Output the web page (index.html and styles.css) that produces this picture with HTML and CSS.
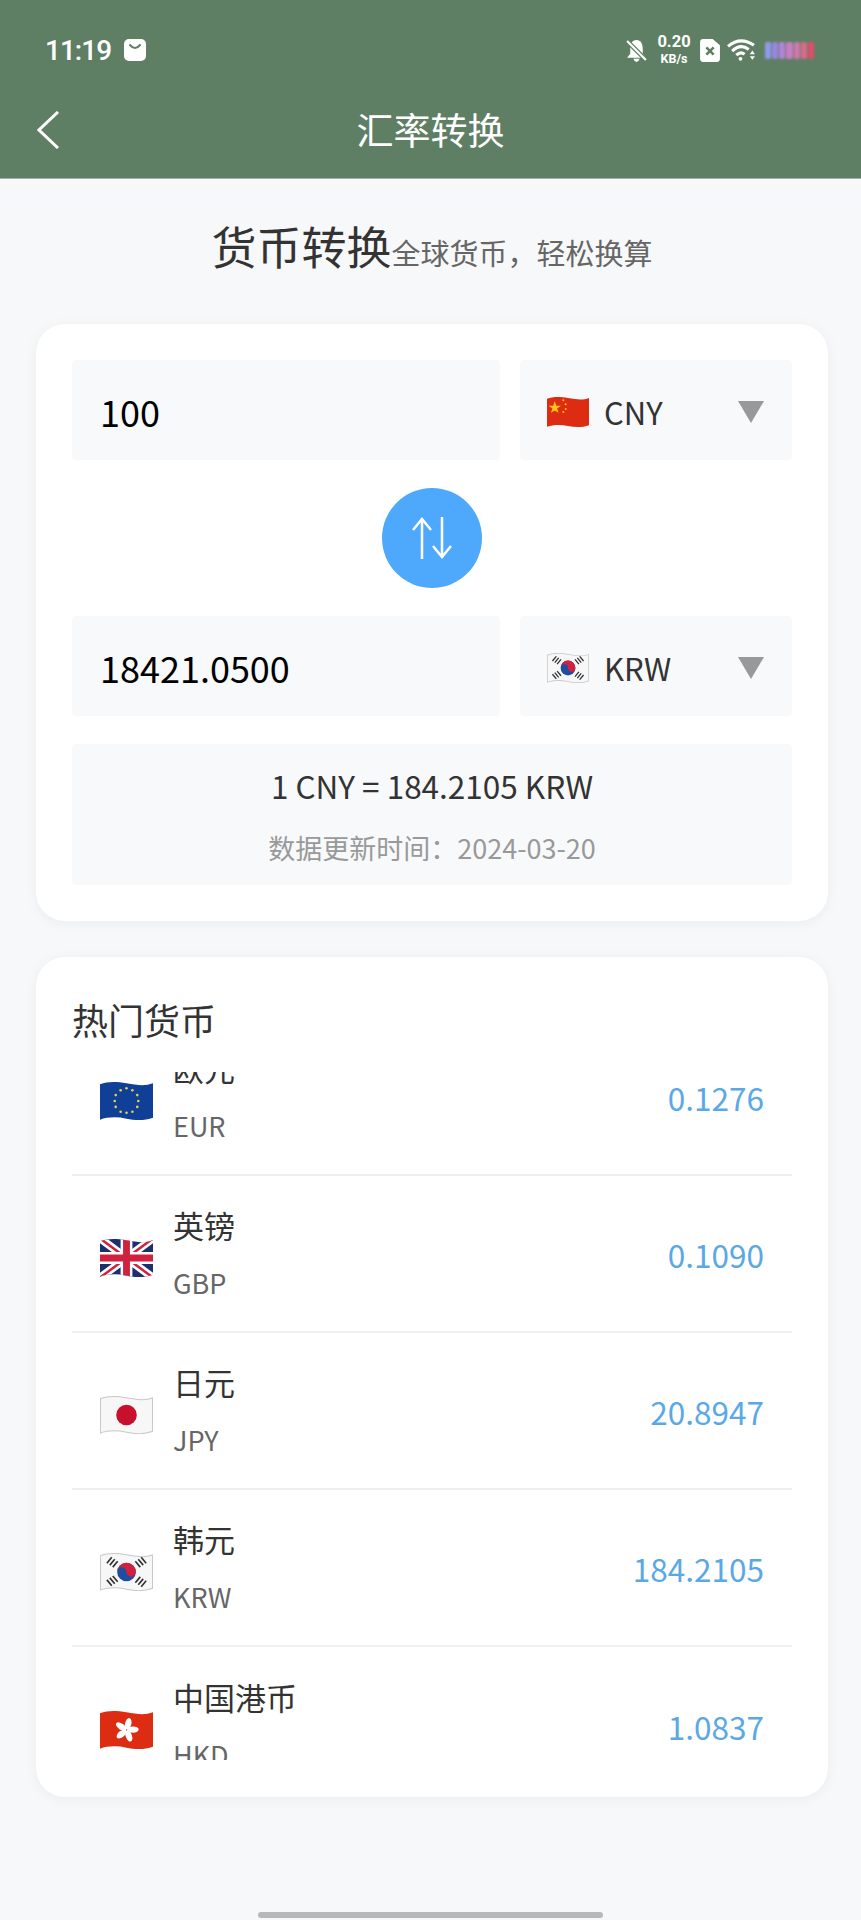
FILE: index.html

```html
<!DOCTYPE html>
<html lang="zh-CN">
<head>
  <meta charset="UTF-8">
  <meta name="viewport" content="width=device-width, initial-scale=1.0">
  <title>汇率转换</title>
  <link rel="stylesheet" href="styles.css">
</head>
<body>

<!-- flags used by the selects and the list -->
<svg class="defs" width="0" height="0" aria-hidden="true">
  <defs>
    <clipPath id="wave">
      <path d="M0 3 C8 0 16 0 27 2 S46 5 54 2 V37 C46 40 36 40 27 38 S8 36 0 39 Z"/>
    </clipPath>
    <symbol id="flag-cn" viewBox="0 0 54 40">
      <g clip-path="url(#wave)">
        <rect width="54" height="40" fill="#dd2c12"/>
        <polygon points="10,6 12,12 18,12 13,15.500 15,21 10,18 5,21 7,15.500 2,12 8,12" fill="#fcc419"/>
        <circle cx="21" cy="5" r="1.300" fill="#fcc419"/>
        <circle cx="24" cy="10" r="1.300" fill="#fcc419"/>
        <circle cx="24" cy="16" r="1.300" fill="#fcc419"/>
        <circle cx="21" cy="20" r="1.300" fill="#fcc419"/>
      </g>
    </symbol>
    <symbol id="flag-kr" viewBox="0 0 54 40">
      <g clip-path="url(#wave)">
        <rect width="54" height="40" fill="#f7f7f7"/>
        <path d="M0 3 C8 0 16 0 27 2 S46 5 54 2 V37 C46 40 36 40 27 38 S8 36 0 39 Z" fill="none" stroke="#c9c9c9" stroke-width="2"/>
        <circle cx="27" cy="20" r="9.500" fill="#1f4ea1"/>
        <path d="M17.500 20 A9.500 9.500 0 0 1 36.500 20 A4.750 4.750 0 0 1 27 20 A4.750 4.750 0 0 0 17.500 20 Z" fill="#d0223f"/>
        <g stroke="#333" stroke-width="1.700">
          <path d="M7 11 L12 5 M10 13 L15 7 M13 15 L18 9"/>
          <path d="M36 9 L41 15 M39 7 L44 13 M42 5 L47 11"/>
          <path d="M7 28 L12 34 M10 26 L15 32 M13 24 L18 30"/>
          <path d="M36 31 L41 25 M39 33 L44 27 M42 35 L47 29"/>
        </g>
      </g>
    </symbol>
    <symbol id="flag-eu" viewBox="0 0 54 40">
      <g clip-path="url(#wave)">
        <rect width="54" height="40" fill="#0f3f96"/>
        <g fill="#e9d44c">
          <circle cx="27" cy="7" r="1.300"/><circle cx="33" cy="9" r="1.300"/><circle cx="38" cy="14" r="1.300"/>
          <circle cx="39" cy="20" r="1.300"/><circle cx="38" cy="26" r="1.300"/><circle cx="33" cy="31" r="1.300"/>
          <circle cx="27" cy="32" r="1.300"/><circle cx="21" cy="31" r="1.300"/><circle cx="16" cy="26" r="1.300"/>
          <circle cx="15" cy="20" r="1.300"/><circle cx="16" cy="14" r="1.300"/><circle cx="21" cy="9" r="1.300"/>
        </g>
      </g>
    </symbol>
    <symbol id="flag-gb" viewBox="0 0 54 40">
      <g clip-path="url(#wave)">
        <rect width="54" height="40" fill="#1c2f6e"/>
        <path d="M0 0 L54 40 M54 0 L0 40" stroke="#fff" stroke-width="8"/>
        <path d="M0 0 L54 40 M54 0 L0 40" stroke="#d0223f" stroke-width="2.500"/>
        <path d="M27 0 V40 M0 20 H54" stroke="#fff" stroke-width="12"/>
        <path d="M27 0 V40 M0 20 H54" stroke="#d0223f" stroke-width="7"/>
      </g>
    </symbol>
    <symbol id="flag-jp" viewBox="0 0 54 40">
      <g clip-path="url(#wave)">
        <rect width="54" height="40" fill="#f7f7f7"/>
        <path d="M0 3 C8 0 16 0 27 2 S46 5 54 2 V37 C46 40 36 40 27 38 S8 36 0 39 Z" fill="none" stroke="#c9c9c9" stroke-width="2"/>
        <circle cx="27" cy="20" r="10.500" fill="#c8102e"/>
      </g>
    </symbol>
    <symbol id="flag-hk" viewBox="0 0 54 40">
      <g clip-path="url(#wave)">
        <rect width="54" height="40" fill="#dd2c12"/>
        <g fill="#fff">
          <ellipse cx="27" cy="13.500" rx="3.200" ry="6" transform="rotate(15 27 20)"/>
          <ellipse cx="27" cy="13.500" rx="3.200" ry="6" transform="rotate(87 27 20)"/>
          <ellipse cx="27" cy="13.500" rx="3.200" ry="6" transform="rotate(159 27 20)"/>
          <ellipse cx="27" cy="13.500" rx="3.200" ry="6" transform="rotate(231 27 20)"/>
          <ellipse cx="27" cy="13.500" rx="3.200" ry="6" transform="rotate(303 27 20)"/>
        </g>
      </g>
    </symbol>
  </defs>
</svg>

<header class="top">
  <div class="status">
    <div class="status-left">
      <span class="clock">11:19</span>
      <svg class="bag" viewBox="0 0 22 22"><rect width="22" height="22" rx="5" fill="#fff"/><path d="M6 6 Q11 12 16 6" fill="none" stroke="#5f7f65" stroke-width="2" stroke-linecap="round"/></svg>
    </div>
    <div class="status-right">
      <svg class="bell" viewBox="0 0 20 22">
        <path d="M10 1 C15 1 16 6 16 10 V14 L19 18 H1 L4 14 V10 C4 6 5 1 10 1 Z M7 19 H13 Q12 22 10 22 Q8 22 7 19 Z" fill="#fff"/>
        <path d="M1 2 L19 20" stroke="#5f7f65" stroke-width="4.500"/>
        <path d="M1 2 L19 20" stroke="#fff" stroke-width="2"/>
      </svg>
      <div class="speed"><b>0.20</b><small>KB/s</small></div>
      <svg class="sim" viewBox="0 0 19 22">
        <path d="M3 0 H12 L19 6 V19 Q19 22 16 22 H3 Q0 22 0 19 V3 Q0 0 3 0 Z" fill="#fff"/>
        <path d="M6 8 L13 15 M13 8 L6 15" stroke="#5f7f65" stroke-width="2.400"/>
      </svg>
      <svg class="wifi" viewBox="0 0 28 21" fill="none" stroke="#fff" stroke-width="3">
        <path d="M1 7 Q13 -3 26 6"/>
        <path d="M5 11.500 Q13 4 21 10"/>
        <path d="M9 15.500 Q13 11.500 17 14.500"/>
        <circle cx="13" cy="19" r="1.800" fill="#fff" stroke="none"/>
        <path d="M24.500 11 L27 14.500 H22 Z M24.500 20 L27 16.500 H22 Z" fill="#fff" stroke="none"/>
      </svg>
      <div class="battery">
        <i></i><i></i><i></i><i></i><i></i><i></i><i></i>
      </div>
    </div>
  </div>
  <div class="nav">
    <svg class="back" viewBox="0 0 22 38" fill="none" stroke="#fff" stroke-width="3"><path d="M21 1 L2 19 L21 37"/></svg>
    <h1 class="nav-title">汇率转换</h1>
  </div>
</header>

<main class="page">
  <div class="head">
    <h2 class="head-title">货币转换</h2>
    <span class="head-sub">全球货币，轻松换算</span>
  </div>

  <section class="card">
    <div class="field-row">
      <input class="amount" type="text" value="100">
      <div class="picker">
        <svg class="picker-flag"><use href="#flag-cn"/></svg>
        <span class="picker-code">CNY</span>
        <span class="arrow"></span>
      </div>
    </div>
    <button class="swap" type="button">
      <svg viewBox="0 0 40 42" fill="none" stroke="#fff" stroke-width="2.500">
        <path d="M10 42 V2 M1 13 L10 2 L19 13"/>
        <path d="M30 0 V40 M21 29 L30 40 L39 29"/>
      </svg>
    </button>
    <div class="field-row">
      <input class="amount" type="text" value="18421.0500" readonly>
      <div class="picker">
        <svg class="picker-flag"><use href="#flag-kr"/></svg>
        <span class="picker-code">KRW</span>
        <span class="arrow"></span>
      </div>
    </div>
    <div class="rate">
      <div class="rate-value">1 CNY = 184.2105 KRW</div>
      <div class="rate-time">数据更新时间：2024-03-20</div>
    </div>
  </section>

  <section class="card card-hot">
    <h3 class="hot-title">热门货币</h3>
    <div class="hot-list">
      <div class="hot-rows">
        <div class="hot-row">
          <svg class="flag"><use href="#flag-eu"/></svg>
          <div class="info"><div class="name">欧元</div><div class="code">EUR</div></div>
          <div class="value">0.1276</div>
        </div>
        <div class="hot-row">
          <svg class="flag"><use href="#flag-gb"/></svg>
          <div class="info"><div class="name">英镑</div><div class="code">GBP</div></div>
          <div class="value">0.1090</div>
        </div>
        <div class="hot-row">
          <svg class="flag"><use href="#flag-jp"/></svg>
          <div class="info"><div class="name">日元</div><div class="code">JPY</div></div>
          <div class="value">20.8947</div>
        </div>
        <div class="hot-row">
          <svg class="flag"><use href="#flag-kr"/></svg>
          <div class="info"><div class="name">韩元</div><div class="code">KRW</div></div>
          <div class="value">184.2105</div>
        </div>
        <div class="hot-row">
          <svg class="flag"><use href="#flag-hk"/></svg>
          <div class="info"><div class="name">中国港币</div><div class="code">HKD</div></div>
          <div class="value">1.0837</div>
        </div>
      </div>
    </div>
  </section>
</main>

<div class="home-bar"></div>

</body>
</html>
```

FILE: styles.css

```css
* { box-sizing: border-box; }
html, body { margin: 0; height: 1920px; overflow: hidden; }
body {
  position: relative;
  background: #f7f8fa;
  color: #333;
  font-family: "Noto Sans CJK SC", "Noto Sans", sans-serif;
}
.defs { position: absolute; }
h1, h2, h3 { margin: 0; font-weight: 400; }

/* green header */
.top { height: 179px; background: #5f7f65; color: #fff; border-bottom: 1px solid #9db3a3; }
.status {
  height: 96px; padding: 4px 46px 0 45px;
  display: flex; align-items: center; justify-content: space-between;
}
.status-left { display: flex; align-items: center; gap: 13px; }
.clock { font-family: Roboto, sans-serif; font-size: 28px; font-weight: 500; letter-spacing: -1px; }
.bag { width: 22px; height: 22px; }
.status-right { display: flex; align-items: center; }
.bell { width: 21px; height: 23px; margin-right: 8px; }
.speed { width: 38px; display: flex; flex-direction: column; align-items: center; font-family: Roboto, sans-serif; }
.speed b { font-size: 16.5px; line-height: 17px; font-weight: 700; }
.speed small { font-size: 12.5px; line-height: 18px; font-weight: 700; }
.sim { width: 20px; height: 23px; margin: 0 7px; }
.wifi { width: 29px; height: 22px; margin-right: 9px; }
.battery { display: flex; width: 50px; height: 17px; filter: blur(1.2px); }
.battery i { flex: 1; margin-right: 1px; border-radius: 2px; }
.battery i:nth-child(1) { background: #8f9be8; }
.battery i:nth-child(2) { background: #9a86e0; }
.battery i:nth-child(3) { background: #b184d8; }
.battery i:nth-child(4) { background: #c97ec4; }
.battery i:nth-child(5) { background: #cf78aa; }
.battery i:nth-child(6) { background: #d56c8c; }
.battery i:nth-child(7) { background: #dc4f68; }

.nav { position: relative; height: 82px; display: flex; align-items: center; justify-content: center; padding-bottom: 17px; }
.nav-title { font-size: 37px; line-height: 50px; }
.back { position: absolute; left: 37px; top: 15px; width: 22px; height: 38px; }

/* page */
.page { padding: 0 33px 0 36px; }
.head { height: 145px; padding-top: 37px; display: flex; justify-content: center; align-items: baseline; }
.head-title { font-size: 45px; line-height: 60px; color: #333; }
.head-sub { font-size: 29px; color: #666; }

.card {
  background: #fff; border-radius: 29px; padding: 36px;
  box-shadow: 0 2px 14px rgba(0, 0, 0, 0.05);
}
.field-row { display: flex; gap: 20px; height: 100px; }
.amount {
  width: 428px; border: 0; outline: 0; padding: 2px 28px 0;
  background: #f8f9fb; border-radius: 4px;
  font-family: inherit; font-size: 36px; color: #000;
}
.picker {
  flex: 1; display: flex; align-items: center; padding: 2px 28px 0 27px;
  background: #f8f9fb; border-radius: 4px;
}
.picker-flag { width: 42px; height: 32px; margin: 2px 15px 0 0; }
.picker-code { flex: 1; font-size: 31px; color: #333; }
.arrow { margin-top: 2px; border-style: solid; border-width: 22px 13px 0; border-color: #999 transparent transparent; }
.swap {
  display: flex; align-items: center; justify-content: center;
  width: 100px; height: 100px; margin: 28px auto; padding: 0;
  border: 0; border-radius: 50%; background: #4ea8fb;
}
.swap svg { width: 40px; height: 42px; }
.rate {
  height: 141px; margin-top: 28px; padding-top: 18px;
  background: #f8f9fb; border-radius: 4px; text-align: center;
}
.rate-value { font-size: 31.5px; line-height: 46px; color: #333; }
.rate-time { margin-top: 21px; font-size: 27px; line-height: 38px; color: #999; }

/* hot list */
.card-hot { margin-top: 36px; height: 840px; padding-top: 34px; }
.hot-title { font-size: 36px; line-height: 56px; color: #333; }
.hot-list { height: 688px; margin-top: 25px; overflow: hidden; }
.hot-rows { margin-top: -53px; }
.hot-row {
  height: 157px; padding: 0 28px; display: flex; align-items: center; gap: 20px;
  border-bottom: 2px solid #f0f0f0;
}
.flag { width: 53px; height: 40px; margin-top: 8px; }
.info { flex: 1; }
.name { font-size: 31px; line-height: 42px; color: #333; }
.code { margin-top: 17px; font-size: 27px; line-height: 40px; color: #666; }
.value { font-size: 31.5px; color: #5aa9e6; }
.hot-row:last-child { border-bottom: 0; }

.home-bar {
  position: absolute; left: 258px; bottom: 2px;
  width: 345px; height: 6px; border-radius: 3px; background: #b8b8b8;
}
```
